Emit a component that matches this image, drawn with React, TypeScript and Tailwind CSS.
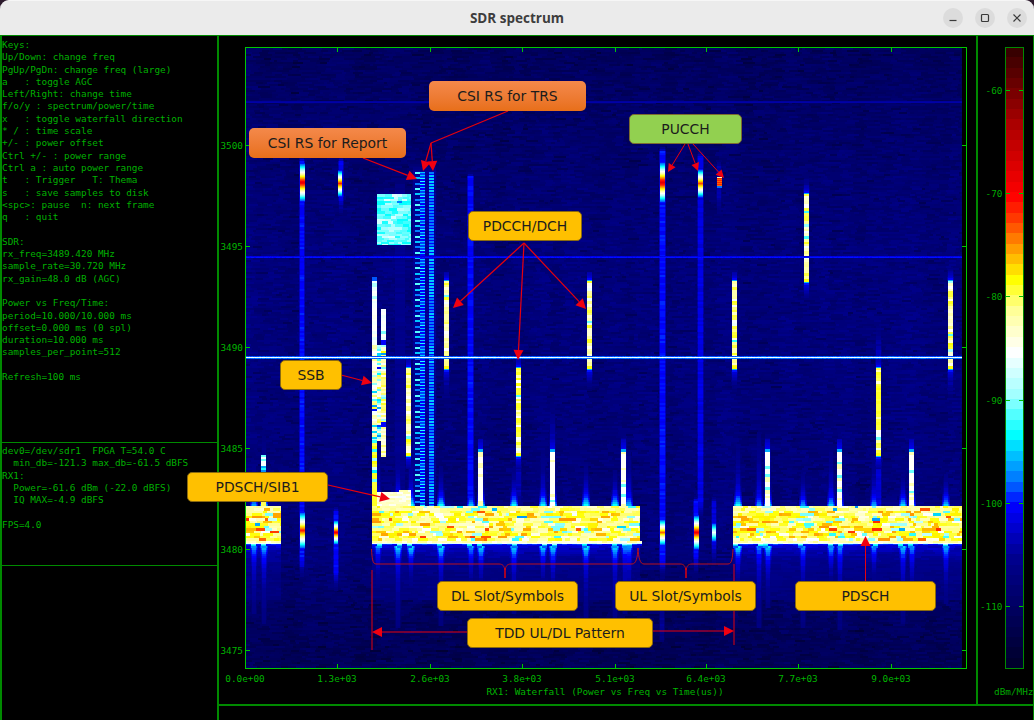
import React from "react";

const X0 = 246, Y0 = 48, W = 716, H = 620;
const LEVELS = 128;
let seed = 12345;
const rnd = () => {
  seed = (seed + 0x6d2b79f5) | 0;
  let t = Math.imul(seed ^ (seed >>> 15), 1 | seed);
  t = (t + Math.imul(t ^ (t >>> 7), 61 | t)) ^ t;
  return ((t ^ (t >>> 14)) >>> 0) / 4294967296;
};
const rr = (a: number, b: number) => a + (b - a) * rnd();

const anchors: [number, number, number, number][] = [
  [0, 0, 0, 0x28], [0.18, 0, 0, 0x90], [0.262, 0, 0, 255], [0.3, 0, 0x70, 255], [0.375, 0, 255, 255],
  [0.44, 0xa0, 255, 255], [0.51, 255, 255, 255], [0.58, 255, 255, 0x90], [0.625, 255, 255, 0],
  [0.665, 255, 0xb0, 0], [0.72, 255, 0x40, 0], [0.76, 255, 0, 0], [0.87, 0xb0, 0, 0], [0.95, 0x60, 0, 0], [1, 0x30, 0, 0],
];
const cmap = (v: number) => {
  const c = Math.min(1, Math.max(0, v));
  for (let i = 1; i < anchors.length; i++) {
    if (c <= anchors[i][0]) {
      const a = anchors[i - 1], b = anchors[i];
      const t = (c - a[0]) / (b[0] - a[0]);
      const m = (k: number) => Math.round(a[k] + (b[k] - a[k]) * t);
      return `rgb(${m(1)},${m(2)},${m(3)})`;
    }
  }
  return "rgb(48,0,0)";
};

function buildWaterfall() {
  const fb = new Float32Array(W * H);
  const put = (x: number, y: number, v: number) => {
    const px = Math.floor(x) - X0, py = Math.floor(y) - Y0;
    if (px < 0 || py < 0 || px >= W || py >= H) return;
    fb[py * W + px] = v;
  };
  const raise = (x: number, y: number, v: number) => {
    const px = Math.floor(x) - X0, py = Math.floor(y) - Y0;
    if (px < 0 || py < 0 || px >= W || py >= H) return;
    if (fb[py * W + px] < v) fb[py * W + px] = v;
  };
  const rect = (x: number, y: number, w: number, h: number, v: number) => {
    for (let j = 0; j < h; j++) for (let i = 0; i < w; i++) put(x + i, y + j, v);
  };

  // background noise
  const base = (y: number) => {
    if (y < 110) return 0.09 + ((y - 48) / 62) * 0.02;
    if (y < 260) return 0.11 + ((y - 110) / 150) * 0.03;
    if (y < 560) return 0.14;
    if (y < 650) return 0.13 - ((y - 560) / 90) * 0.05;
    return 0.08;
  };
  const colGain = new Float32Array(W);
  for (let x = 0; x < W; x += 7) {
    const g = rr(-0.012, 0.012);
    for (let i = 0; i < 7 && x + i < W; i++) colGain[x + i] = g;
  }
  for (let y = Y0; y < Y0 + H; y += 2) {
    let x = X0;
    while (x < X0 + W) {
      const w = 3 + Math.floor(rnd() * 10);
      let n = rr(-0.022, 0.022);
      if (rnd() < 0.08) n -= 0.03;
      const v = base(y) + n + colGain[x - X0];
      rect(x, y, w, 2, v);
      x += w;
    }
  }

  const stripe = (x0: number, w: number, y0: number, y1: number, v: number, fadeTop = 6, fadeBot = 20) => {
    for (let y = y0; y < y1; y += 2) {
      const n = rr(-0.012, 0.012);
      let f = 1;
      if (y - y0 < fadeTop) f = (y - y0) / fadeTop;
      if (y1 - y < fadeBot) f = Math.min(f, (y1 - y) / fadeBot);
      const val = 0.13 + (v - 0.13) * f + n;
      for (let i = -1; i <= w; i++) {
        const edge = i < 0 || i >= w;
        raise(x0 + i, y, edge ? val - 0.05 : val);
        raise(x0 + i, y + 1, edge ? val - 0.05 : val);
      }
    }
  };
  const hot = (x0: number, w: number, yc: number, half: number, peak: number) => {
    for (let y = yc - half; y <= yc + half; y++) {
      const d = Math.abs(y - yc) / half;
      const v = peak - d * (peak - 0.27);
      for (let i = 0; i < w; i++) put(x0 + i, y, v);
    }
  };

  // faint columns
  stripe(395, 10, 180, 505, 0.17, 10, 5);
  stripe(413, 23, 165, 506, 0.18, 6, 2);
  // long stripes
  stripe(300, 4, 155, 578, 0.262);
  stripe(339, 4, 155, 215, 0.25, 6, 20);
  stripe(334, 4, 505, 590, 0.26);
  stripe(468, 5, 172, 506, 0.26, 4, 1);
  stripe(660, 5, 145, 578, 0.262);
  stripe(660, 4, 578, 642, 0.18, 1, 20);
  stripe(698, 5, 150, 520, 0.24);
  stripe(694, 4, 495, 575, 0.26);
  stripe(717, 4, 160, 215, 0.2);
  stripe(712, 4, 495, 565, 0.23);
  stripe(516, 5, 358, 510, 0.2);
  stripe(876, 5, 320, 368, 0.21, 30, 1);
  stripe(876, 5, 456, 560, 0.23, 1, 40);
  stripe(948, 5, 369, 398, 0.24, 1, 28);
  stripe(948, 5, 265, 281, 0.24, 12, 1);
  stripe(587, 5, 369, 390, 0.24, 1, 20);
  stripe(732, 5, 369, 390, 0.24, 1, 20);
  stripe(444, 5, 369, 400, 0.22, 1, 25);
  stripe(804, 5, 282, 300, 0.23, 1, 16);
  stripe(804, 5, 175, 194, 0.22, 14, 1);
  stripe(550, 5, 400, 506, 0.21, 40, 1);
  stripe(621, 5, 430, 506, 0.23, 20, 1);
  stripe(765, 5, 430, 506, 0.23, 20, 1);

  // flares around blocks
  const flares = [253, 263, 377, 397, 410, 440, 470, 480, 513, 542, 552, 585, 614, 624, 628, 737, 758, 767, 802, 830, 839, 873, 902, 911, 945];
  const glow = (fx: number, y: number, v: number) => {
    for (let i = -3; i <= 4; i++) {
      const d = Math.abs(i - 0.5);
      const vv = d > 3 ? v - 0.07 : d > 2 ? v - 0.035 : v;
      raise(fx + i, y, vv);
      raise(fx + i, y + 1, vv);
    }
  };
  for (const fx of flares) {
    const s = rr(0.6, 1);
    const up = 30 + rnd() * 50, dn = 40 + rnd() * 45;
    for (let y = 430; y < 506; y += 2) {
      const d = 506 - y;
      if (d > up) continue;
      glow(fx, y, 0.15 + 0.2 * s * Math.exp(-d / 10) + 0.07 * (1 - d / up) + rr(-0.006, 0.006));
    }
    for (let y = 544; y < 640; y += 2) {
      const d = y - 544;
      if (d > dn) continue;
      glow(fx, y, 0.15 + 0.17 * s * Math.exp(-d / 12) + 0.08 * (1 - d / dn) + rr(-0.006, 0.006));
    }
  }
  // dim haze below blocks
  for (const [a, b] of [[246, 281], [372, 640], [733, 962]]) {
    for (let y = 544; y < 600; y += 2) {
      let x = a;
      while (x < b) {
        const w = 6 + Math.floor(rnd() * 12);
        const v = 0.14 + 0.09 * Math.exp(-(y - 544) / 16) + rr(-0.012, 0.016);
        for (let i = 0; i < w && x + i < b; i++) {
          raise(x + i, y, v);
          raise(x + i, y + 1, v);
        }
        x += w;
      }
    }
  }

  // hot spots
  hot(300, 5, 182, 19, 0.79);
  hot(338, 4, 183, 13, 0.74);
  hot(300, 5, 530, 18, 0.74);
  hot(334, 4, 532, 12, 0.78);
  hot(660, 5, 182, 20, 0.8);
  hot(698, 5, 183, 14, 0.72);
  rect(717, 177, 5, 10, 0.74);
  rect(717, 177, 5, 1, 0.56);
  rect(717, 186, 5, 2, 0.3);
  for (let y = 179; y < 186; y += 2) rect(717, y, 5, 1, 0.7);
  hot(660, 5, 532, 13, 0.7);
  hot(694, 5, 532, 17, 0.78);
  hot(712, 4, 532, 9, 0.5);

  // bright bars
  const pickBar = (yellowish: number) => {
    const r = rnd();
    if (r < 0.22 * yellowish) return rr(0.6, 0.62);
    if (r < 0.84) return rr(0.53, 0.59);
    if (r < 0.965) return rr(0.495, 0.53);
    return rr(0.39, 0.45);
  };
  const bar = (x0: number, y0: number, y1: number, yellowish = 1, w = 5) => {
    let y = y0;
    while (y < y1) {
      const h = 2 + Math.floor(rnd() * 2);
      const v = pickBar(yellowish);
      for (let j = 0; j < h && y + j < y1; j++) for (let i = 0; i < w; i++) put(x0 + i, y + j, v);
      y += h;
    }
    rect(x0, y1 - 2, w, 3, 0.62);
    rect(x0, y1 + 1, w, 1, 0.34);
    rect(x0, y1 + 2, w, 2, 0.27);
    rect(x0, y0 - 1, w, 1, 0.33);
    rect(x0, y0 - 3, w, 2, 0.26);
    for (let j = 4; j < 10; j++) rect(x0, y0 - j, w, 1, 0.25 - j * 0.006);
    for (let j = 4; j < 14; j++) rect(x0, y1 + j, w, 1, 0.25 - j * 0.005);
  };
  bar(444, 281, 368);
  bar(516, 368, 455, 2.6);
  bar(587, 281, 368);
  bar(732, 281, 368, 1.5);
  bar(948, 281, 368, 1.3);
  bar(876, 368, 455, 3);
  bar(804, 194, 281, 1);
  bar(406, 368, 455, 0.3);
  for (const sx of [478, 550, 621, 765, 837, 909]) {
    let y = 452;
    rect(sx, 449, 5, 3, 0.33);
    for (let j = 4; j < 14; j++) rect(sx, 452 - j, 5, 1, 0.27 - j * 0.005);
    while (y < 506) {
      const h = 2 + Math.floor(rnd() * 2);
      const r = rnd();
      rect(sx, y, 5, h, r < 0.66 ? 0.51 : r < 0.9 ? 0.56 : 0.42);
      y += h;
    }
  }
  // x=261 short
  for (let y = 455; y < 466; y += 2) rect(261, y, 5, 2, rnd() < 0.7 ? 0.5 : 0.42);
  for (let y = 466; y < 506; y += 2) rect(261, y, 5, 2, 0.3 + rnd() * 0.1);
  rect(261, 500, 5, 6, 0.6);

  // composite bars near SSB
  const mix = () => {
    const r = rnd();
    if (r < 0.2) return rr(0.58, 0.61);
    if (r < 0.6) return rr(0.5, 0.57);
    if (r < 0.8) return rr(0.39, 0.46);
    if (r < 0.95) return rr(0.31, 0.37);
    return rr(0.26, 0.29);
  };
  let yy = 281;
  while (yy < 345) {
    const h = 2 + Math.floor(rnd() * 3);
    rect(372, yy, 5, h, rnd() < 0.86 ? rr(0.49, 0.52) : rr(0.42, 0.46));
    yy += h;
  }
  rect(372, 277, 5, 4, 0.29);
  for (yy = 345; yy < 440; yy += 2) {
    rect(372, yy, 5, 2, rnd() < 0.55 ? rr(0.49, 0.58) : mix());
    rect(377, yy, 4, 2, mix());
  }
  for (yy = 440; yy < 490; yy += 3) rect(372, yy, 5, 3, rnd() < 0.6 ? rr(0.6, 0.625) : rr(0.37, 0.48));
  rect(372, 490, 5, 16, 0.615);
  yy = 309;
  while (yy < 340) {
    const h = 2 + Math.floor(rnd() * 3);
    rect(381, yy, 5, h, rnd() < 0.8 ? rr(0.49, 0.52) : rr(0.42, 0.46));
    yy += h;
  }
  rect(381, 340, 5, 5, 0.26);
  for (yy = 345; yy < 422; yy += 2) rect(381, yy, 5, 2, rnd() < 0.5 ? rr(0.58, 0.62) : mix());
  rect(381, 422, 5, 5, 0.26);
  for (yy = 427; yy < 456; yy += 2) rect(381, yy, 5, 2, rr(0.52, 0.6));

  // cyan CSI block
  for (let y = 194; y < 245; ) {
    const h = 2 + Math.floor(rnd() * 2);
    let x = 377;
    while (x < 411) {
      const w = 4 + Math.floor(rnd() * 5);
      const r = rnd();
      const v = r < 0.04 ? rr(0.3, 0.33) : r < 0.3 ? rr(0.375, 0.39) : r < 0.82 ? rr(0.4, 0.44) : rr(0.45, 0.49);
      for (let j = 0; j < h && y + j < 245; j++) for (let i = 0; i < w && x + i < 411; i++) put(x + i, y + j, v);
      x += w;
    }
    y += h;
  }

  // CSI RS columns
  for (let y = 172, k = 0; y < 507; y += 5.3, k++) {
    const v = k % 3 === 0 ? 0.41 : k % 3 === 1 ? 0.35 : 0.31;
    rect(415, Math.round(y), 5, 2, v);
  }
  for (let y = 172; y < 507; y += 3) {
    const r = rnd();
    rect(420, y, 5, 1, r < 0.6 ? 0.345 : 0.385);
    rect(420, y + 1, 5, 2, r < 0.3 ? 0.28 : 0.26);
    const q = rnd();
    rect(429, y, 5, 2, q < 0.5 ? 0.345 : 0.305);
    rect(429, y + 2, 5, 1, 0.26);
  }

  // data blocks
  const pickData = () => {
    const r = rnd();
    if (r < 0.33) return rr(0.605, 0.63);
    if (r < 0.69) return rr(0.545, 0.6);
    if (r < 0.79) return rr(0.505, 0.54);
    if (r < 0.92) return rr(0.645, 0.675);
    if (r < 0.945) return rr(0.7, 0.73);
    if (r < 0.985) return rr(0.41, 0.47);
    return rr(0.32, 0.36);
  };
  const isFlare = (x: number) => flares.some((f) => Math.abs(f - x) < 3);
  for (const [a, b] of [[246, 281], [372, 640], [733, 962]]) {
    let y = 506, k = 0;
    while (y < 544) {
      const h = k % 2 ? 3 : 2;
      k++;
      let x = a;
      while (x < b) {
        const w = 3 + Math.floor(rnd() * 8);
        let v = pickData();
        if (y < 509) v = rnd() < 0.7 ? rr(0.54, 0.6) : v;
        if (isFlare(x) && rnd() < 0.22) v = rr(0.39, 0.45);
        for (let j = 0; j < h && y + j < 544; j++) for (let i = 0; i < w && x + i < b; i++) put(x + i, y + j, v);
        x += w;
      }
      y += h;
    }
    for (let x = a; x < b; x += 5) {
      const fl = isFlare(x + 2);
      rect(x, 541, 5, 2, rr(0.52, 0.58));
      rect(x, 543, 5, 1, rr(0.47, 0.52));
      rect(x, 544, 5, 1, fl ? rr(0.38, 0.44) : rr(0.26, 0.29));
      rect(x, 545, 5, 1, fl ? rr(0.33, 0.37) : rr(0.22, 0.25));
      if (fl) rect(x, 546, 5, 2, rr(0.28, 0.32));
    }
  }
  // SIB1
  for (let y = 490; y < 506; y += 2) {
    let x = 377;
    while (x < 411) {
      const w = 4 + Math.floor(rnd() * 6);
      const v = rr(0.505, 0.56);
      for (let i = 0; i < w && x + i < 411; i++) {
        if (y < 491 && x + i < 399) continue;
        put(x + i, y, v);
        put(x + i, y + 1, v);
      }
      x += w;
    }
  }

  // horizontal tones
  for (let x = X0; x < X0 + W; x++) {
    put(x, 101, 0.19);
    put(x, 102, 0.2);
    put(x, 256, rr(0.235, 0.25));
    put(x, 257, rr(0.262, 0.27));
    put(x, 356, rr(0.28, 0.3));
    put(x, 357, rr(0.49, 0.515));
    put(x, 358, rr(0.29, 0.31));
  }

  const paths: string[][] = Array.from({ length: LEVELS }, () => []);
  for (let py = 0; py < H; py++) {
    let start = 0;
    const idx = (v: number) => Math.max(0, Math.min(LEVELS - 1, Math.round(v * (LEVELS - 1))));
    let cur = idx(fb[py * W]);
    for (let px = 1; px <= W; px++) {
      const c = px < W ? idx(fb[py * W + px]) : -1;
      if (c !== cur) {
        const l = px - start;
        paths[cur].push(`M${start + X0} ${py + Y0}h${l}v1h-${l}z`);
        start = px;
        cur = c;
      }
    }
  }
  return paths.map((p, i) => ({ fill: cmap(i / (LEVELS - 1)), d: p.join("") })).filter((p) => p.d);
}

const WATERFALL = buildWaterfall();

const KEYS = `Keys:
Up/Down: change freq
PgUp/PgDn: change freq (large)
a   : toggle AGC
Left/Right: change time
f/o/y : spectrum/power/time
x   : toggle waterfall direction
* / : time scale
+/- : power offset
Ctrl +/- : power range
Ctrl a : auto power range
t   : Trigger   T: Thema
s   : save samples to disk
<spc>: pause  n: next frame
q   : quit

SDR:
rx_freq=3489.420 MHz
sample_rate=30.720 MHz
rx_gain=48.0 dB (AGC)

Power vs Freq/Time:
period=10.000/10.000 ms
offset=0.000 ms (0 spl)
duration=10.000 ms
samples_per_point=512

Refresh=100 ms`;

const STATS = `dev0=/dev/sdr1  FPGA T=54.0 C
  min_db=-121.3 max_db=-61.5 dBFS
RX1:
  Power=-61.6 dBm (-22.0 dBFS)
  IQ MAX=-4.9 dBFS

FPS=4.0`;

const MONO = "font-['DejaVu_Sans_Mono',monospace]";
const yTicks: [number, string][] = [[145, "3500"], [246, "3495"], [347, "3490"], [448, "3485"], [549, "3480"], [650, "3475"]];
const xTicks: [number, string][] = [[245, "0.0e+00"], [337, "1.3e+03"], [430, "2.6e+03"], [522, "3.8e+03"], [615, "5.1e+03"], [706, "6.4e+03"], [798, "7.7e+03"], [891, "9.0e+03"]];
const cbTicks: [number, string][] = [[90, "-60"], [193, "-70"], [296, "-80"], [400, "-90"], [503, "-100"], [606, "-110"]];

function Plot() {
  return (
    <svg viewBox="219 36 757 668" className="w-[757px] h-[668px] block">
      {WATERFALL.map((p, i) => (
        <path key={i} d={p.d} fill={p.fill} shapeRendering="crispEdges" />
      ))}
      <g stroke="#00c800" strokeWidth="1" shapeRendering="crispEdges" fill="none">
        <rect x="245.5" y="47.5" width="721" height="621" />
        {yTicks.map(([y]) => (
          <path key={y} d={`M246 ${y + 0.5}h4M962 ${y + 0.5}h4`} />
        ))}
        {xTicks.slice(1).map(([x]) => (
          <path key={x} d={`M${x + 0.5} 48v4M${x + 0.5} 664v4`} />
        ))}
      </g>
      <g fill="#00b400" fontFamily="'DejaVu Sans Mono', monospace" fontSize="9.4">
        {yTicks.map(([y, t]) => (
          <text key={y} x="243" y={y + 3.5} textAnchor="end">{t}</text>
        ))}
        {xTicks.map(([x, t]) => (
          <text key={x} x={x} y="682" textAnchor="middle">{t}</text>
        ))}
        <text x="605" y="694.5" textAnchor="middle">RX1: Waterfall (Power vs Freq vs Time(us))</text>
      </g>
    </svg>
  );
}

function ColorBar() {
  const n = 60;
  const bh = 621 / n;
  return (
    <svg viewBox="978 36 55 668" className="w-[55px] h-[668px] block">
      {Array.from({ length: n }, (_, i) => (
        <rect key={i} x="1005" y={47 + i * bh} width="18" height={bh + 0.5} fill={cmap(1 - (i + 0.5) / n)} shapeRendering="crispEdges" />
      ))}
      <g stroke="#008a00" fill="none" shapeRendering="crispEdges">
        <rect x="1005.5" y="47.5" width="18" height="621" />
      </g>
      <g stroke="#00c000" shapeRendering="crispEdges">
        {cbTicks.map(([y]) => (
          <path key={y} d={`M1006 ${y + 0.5}h4M1019 ${y + 0.5}h4`} />
        ))}
      </g>
      <g fill="#00a800" fontFamily="'DejaVu Sans Mono', monospace" fontSize="9.4">
        {cbTicks.map(([y, t]) => (
          <text key={y} x="1002.5" y={y + 3.5} textAnchor="end">{t}</text>
        ))}
        <text x="994" y="695">dBm/MHz</text>
      </g>
    </svg>
  );
}

const RED = "#e8000c";
function Arrow({ x1, y1, x2, y2, l = 10, w = 5, sw = 1.2 }: { x1: number; y1: number; x2: number; y2: number; l?: number; w?: number; sw?: number }) {
  const a = Math.atan2(y2 - y1, x2 - x1);
  const bx = x2 - Math.cos(a) * l, by = y2 - Math.sin(a) * l;
  const nx = -Math.sin(a) * w, ny = Math.cos(a) * w;
  return (
    <g>
      <line x1={x1} y1={y1} x2={bx} y2={by} stroke={RED} strokeWidth={sw} />
      <polygon points={`${x2},${y2} ${bx + nx},${by + ny} ${bx - nx},${by - ny}`} fill="#f00010" />
    </g>
  );
}

function Annotations() {
  return (
    <svg viewBox="0 0 1034 720" className="absolute left-0 top-0 w-[1034px] h-[720px] pointer-events-none">
      <line x1="508" y1="111" x2="431" y2="143" stroke={RED} strokeWidth="1.2" />
      <Arrow x1={431} y1={143} x2={423} y2={171} />
      <Arrow x1={431} y1={143} x2={433} y2={171} />
      <Arrow x1={363} y1={158} x2={417} y2={179} />
      <Arrow x1={685} y1={144} x2={668} y2={172} l={8} w={4} sw={1} />
      <Arrow x1={688} y1={144} x2={698} y2={171} l={8} w={4} sw={1} />
      <Arrow x1={693} y1={144} x2={724} y2={178} l={8} w={4} sw={1} />
      <Arrow x1={524} y1={243} x2={453} y2={308} />
      <Arrow x1={524} y1={243} x2={518} y2={360} />
      <Arrow x1={524} y1={243} x2={586} y2={309} />
      <Arrow x1={341} y1={375} x2={372} y2={383} />
      <Arrow x1={328} y1={485} x2={390} y2={499} />
      <Arrow x1={467} y1={632} x2={372} y2={632} sw={1} />
      <Arrow x1={653} y1={631} x2={734} y2={631} sw={1} />
      <Arrow x1={865.5} y1={581} x2={865.5} y2={536} sw={1} />
      <g stroke="#e0000c" strokeWidth="1" fill="none">
        <path d="M372 570V650M734 564V645" />
        <path d="M371.5 549C372 558 372.5 564 376 564H499C503 564 504 566 505 570C506 566 507 564 511 564H632C636 564 637.5 558 638 548C638.5 558 640 564 644 564H680C684 564 685 566 686 570C687 566 688 564 692 564H728C732 564 732.5 558 733 549" stroke="#b8101c" />
        <path d="M505 568V578M686 568V578" strokeWidth="1.5" />
      </g>
    </svg>
  );
}

const calloutBase = "absolute flex items-center justify-center rounded-[5px] font-['DejaVu_Sans',sans-serif] text-[13.9px] text-[#1c1c1c] whitespace-pre";
const yellow = "bg-[#ffc000] border border-[#8a6a10]";
const orange = "bg-gradient-to-b from-[#f4894a] to-[#e86f18]";

function Callouts() {
  return (
    <>
      <div className={`${calloutBase} ${orange} left-[429px] top-[81px] w-[157px] h-[30px]`}>CSI RS for TRS</div>
      <div className={`${calloutBase} ${orange} left-[249px] top-[128px] w-[157px] h-[30px]`}>CSI RS for Report</div>
      <div className={`${calloutBase} bg-[#92d050] border border-[#7b6a30] left-[629px] top-[114px] w-[113px] h-[30px]`}>PUCCH</div>
      <div className={`${calloutBase} ${yellow} left-[468px] top-[211px] w-[114px] h-[30px]`}>PDCCH/DCH</div>
      <div className={`${calloutBase} ${yellow} left-[280px] top-[360px] w-[62px] h-[30px]`}>SSB</div>
      <div className={`${calloutBase} ${yellow} left-[187px] top-[472px] w-[141px] h-[30px]`}>PDSCH/SIB1</div>
      <div className={`${calloutBase} ${yellow} left-[437px] top-[581px] w-[141px] h-[30px]`}>DL Slot/Symbols</div>
      <div className={`${calloutBase} ${yellow} left-[615px] top-[581px] w-[141px] h-[30px]`}>UL Slot/Symbols</div>
      <div className={`${calloutBase} ${yellow} left-[795px] top-[581px] w-[141px] h-[30px]`}>PDSCH</div>
      <div className={`${calloutBase} ${yellow} left-[467px] top-[618px] w-[186px] h-[30px]`}>TDD UL/DL Pattern</div>
    </>
  );
}

function WinButton({ children }: { children: React.ReactNode }) {
  return (
    <div className="w-[20px] h-[20px] rounded-full bg-[#dcdcdc] flex items-center justify-center">
      <svg viewBox="0 0 12 12" className="w-[12px] h-[12px]" fill="none" stroke="#3a3a3a" strokeWidth="1.2">
        {children}
      </svg>
    </div>
  );
}

export default function App() {
  return (
    <div className="relative w-[1034px] h-[720px] overflow-hidden bg-[#2c1a2c] flex flex-col">
      <div className="relative h-[35px] shrink-0 bg-[#ebebeb] border-t border-[#f6f6f6] rounded-t-[9px] flex items-center justify-end pr-[7px] gap-[12px]">
        <div className="absolute left-0 right-0 text-center font-['Open_Sans',sans-serif] font-bold text-[13.5px] text-[#3d3d3d]">SDR spectrum</div>
        <WinButton><path d="M2.5 8.5h7" /></WinButton>
        <WinButton><rect x="2.5" y="2.5" width="7" height="7" rx="1" /></WinButton>
        <WinButton><path d="M2.5 2.5l7 7M9.5 2.5l-7 7" /></WinButton>
      </div>
      <div className="flex-1 flex bg-black border-t border-[#008a00]">
        <div className={`w-[219px] shrink-0 flex flex-col border-l-2 border-r-2 border-[#008a00] text-[#00b000] text-[9.4px] leading-[12.3px] ${MONO} whitespace-pre`}>
          <div className="h-[407px] pt-[3px] border-b border-[#008a00]">{KEYS}</div>
          <div className="h-[123px] pt-[2px] border-b border-[#008a00]">{STATS}</div>
          <div className="flex-1" />
        </div>
        <div className="flex-1 flex flex-col border-r border-[#008a00]">
          <div className="flex h-[668px]">
            <Plot />
            <div className="border-l-2 border-[#008a00]">
              <ColorBar />
            </div>
          </div>
          <div className="flex-1 border-t-2 border-[#008a00]" />
        </div>
      </div>
      <Annotations />
      <Callouts />
    </div>
  );
}
